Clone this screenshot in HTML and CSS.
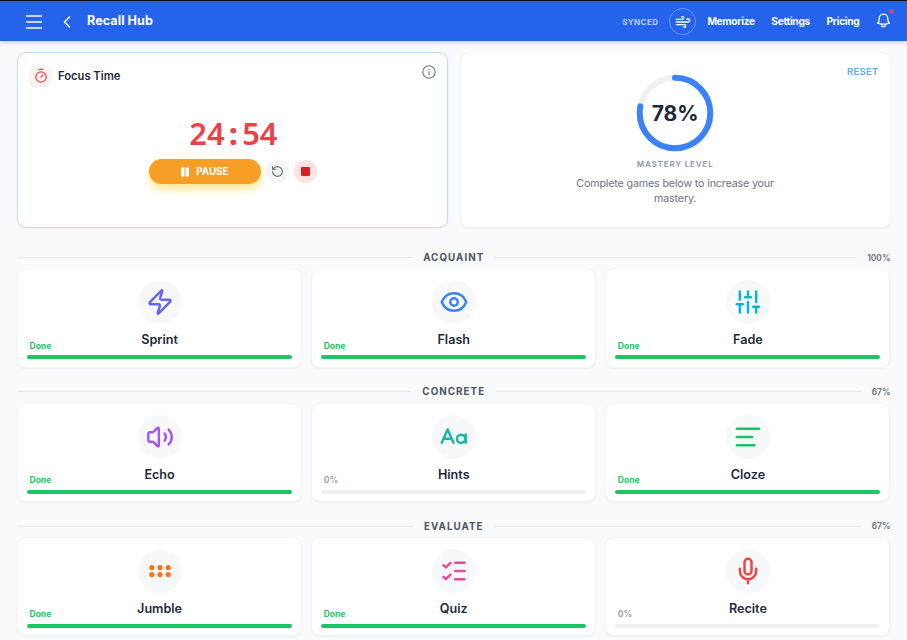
FILE: index.html
```html
<!DOCTYPE html>
<html lang="en">
<head>
    <meta charset="UTF-8">
    <meta name="viewport" content="width=device-width, initial-scale=1.0">
    <title>Recall Hub</title>
    <link rel="stylesheet" href="styles.css">
</head>
<body>

    <header class="topbar">
        <svg class="menu-icon" viewBox="0 0 16 14"><path d="M.5 1h15M.5 7h15M.5 13h15"/></svg>
        <svg class="back-icon" viewBox="0 0 8 12"><path d="M6.5 1L1.5 6l5 5"/></svg>
        <h1>Recall Hub</h1>
        <span class="synced">SYNCED</span>
        <span class="wind">
            <svg viewBox="0 0 24 24"><path d="M12.8 19.6A2 2 0 1 0 14 16H2M17.5 8a2.5 2.5 0 1 1 2 4H2M9.8 4.400A2 2 0 1 1 11 8H2"/></svg>
        </span>
        <nav>
            <a>Memorize</a>
            <a>Settings</a>
            <a>Pricing</a>
        </nav>
        <span class="bell">
            <svg viewBox="0 0 24 24"><path d="M14.857 17.082a23.848 23.848 0 0 0 5.454-1.31A8.967 8.967 0 0 1 18 9.750V9A6 6 0 0 0 6 9v.75a8.967 8.967 0 0 1-2.312 6.022c1.733.64 3.560 1.085 5.455 1.310m5.714 0a24.255 24.255 0 0 1-5.714 0m5.714 0a3 3 0 1 1-5.714 0"/></svg>
            <i class="bell-dot"></i>
        </span>
    </header>

    <main>
        <div class="summary">
            <section class="panel focus">
                <div class="focus-head">
                    <span class="focus-icon">
                        <svg viewBox="0 0 14 16"><circle cx="7" cy="9" r="5.200"/><path d="M5.200 1.300h3.600M7 9l2-2"/></svg>
                    </span>
                    <h2>Focus Time</h2>
                    <svg class="info" viewBox="0 0 14 14"><circle cx="7" cy="7" r="6.200"/><path d="M7 6.500v3.500M7 4v.6"/></svg>
                </div>
                <div class="time">24<span class="colon">:</span>54</div>
                <div class="controls">
                    <button class="pause"><svg viewBox="0 0 8 10"><path d="M0 .5h3.500v9H0zM4.500 .5h3.500v9H4.500z"/></svg>PAUSE</button>
                    <button class="round reset-timer"><svg viewBox="0 0 24 24"><path d="M3 12a9 9 0 1 0 9-9 9.750 9.750 0 0 0-6.740 2.740L3 8"/><path d="M3 3v5h5"/></svg></button>
                    <button class="round stop"><i></i></button>
                </div>
            </section>

            <section class="panel mastery">
                <a class="reset">RESET</a>
                <div class="ring">
                    <svg viewBox="0 0 78 78">
                        <circle class="ring-track" cx="39" cy="39" r="35.300"/>
                        <circle class="ring-value" cx="39" cy="39" r="35.300" pathLength="100" stroke-dasharray="78 100"/>
                    </svg>
                    <strong>78%</strong>
                </div>
                <h3>MASTERY LEVEL</h3>
                <p>Complete games below to increase your mastery.</p>
            </section>
        </div>

        <section class="stage">
            <div class="stage-head">
                <span class="line"></span>
                <h2>ACQUAINT</h2>
                <div class="stage-end"><span class="line"></span><span class="percent">100%</span></div>
            </div>
            <div class="games">
                <div class="game done">
                    <span class="icon indigo"><svg viewBox="0 0 24 24"><path d="M4 14a1 1 0 0 1-.78-1.630l9.900-10.200a.5.5 0 0 1 .86.460l-1.920 6.020A1 1 0 0 0 13 10h7a1 1 0 0 1 .78 1.630l-9.900 10.200a.5.5 0 0 1-.86-.460l1.920-6.020A1 1 0 0 0 11 14z"/></svg></span>
                    <h3>Sprint</h3>
                    <span class="status">Done</span>
                    <div class="bar"></div>
                </div>
                <div class="game done">
                    <span class="icon blue"><svg viewBox="0 0 24 24"><path d="M1.500 12C3.500 7 7.500 4.500 12 4.500S20.500 7 22.500 12C20.500 17 16.500 19.500 12 19.500S3.500 17 1.500 12z"/><circle cx="12" cy="12" r="3.200"/></svg></span>
                    <h3>Flash</h3>
                    <span class="status">Done</span>
                    <div class="bar"></div>
                </div>
                <div class="game done">
                    <span class="icon cyan"><svg viewBox="0 0 24 24"><path d="M5 21v-7M5 10V3M12 21v-9M12 8V3M19 21v-5M19 12V3M2.500 14h5M9.500 8h5M16.500 16h5"/></svg></span>
                    <h3>Fade</h3>
                    <span class="status">Done</span>
                    <div class="bar"></div>
                </div>
            </div>
        </section>

        <section class="stage">
            <div class="stage-head">
                <span class="line"></span>
                <h2>CONCRETE</h2>
                <div class="stage-end"><span class="line"></span><span class="percent">67%</span></div>
            </div>
            <div class="games">
                <div class="game done">
                    <span class="icon purple"><svg viewBox="0 0 24 24"><path d="M11 4.700a.7.7 0 0 0-1.200-.5L6.400 7.600A1.400 1.400 0 0 1 5.400 8H3a1 1 0 0 0-1 1v6a1 1 0 0 0 1 1h2.400a1.400 1.400 0 0 1 1 .4l3.400 3.400a.7.7 0 0 0 1.200-.5zM16 9a5 5 0 0 1 0 6M19.400 18.400a9 9 0 0 0 0-12.800"/></svg></span>
                    <h3>Echo</h3>
                    <span class="status">Done</span>
                    <div class="bar"></div>
                </div>
                <div class="game">
                    <span class="icon teal"><svg viewBox="0 0 24 24"><path d="M1.500 17L6.500 5.500l5 11.500M3.300 13.500h6.400"/><circle cx="18" cy="13.500" r="3.500"/><path d="M22 9.800v7.200"/></svg></span>
                    <h3>Hints</h3>
                    <span class="status">0%</span>
                    <div class="bar"></div>
                </div>
                <div class="game done">
                    <span class="icon green"><svg viewBox="0 0 24 24"><path d="M2.500 5h19M2.500 12h13M2.500 19h15"/></svg></span>
                    <h3>Cloze</h3>
                    <span class="status">Done</span>
                    <div class="bar"></div>
                </div>
            </div>
        </section>

        <section class="stage">
            <div class="stage-head">
                <span class="line"></span>
                <h2>EVALUATE</h2>
                <div class="stage-end"><span class="line"></span><span class="percent">67%</span></div>
            </div>
            <div class="games">
                <div class="game done">
                    <span class="icon orange"><svg viewBox="0 0 24 24"><circle cx="5" cy="9" r="1.200"/><circle cx="12" cy="9" r="1.200"/><circle cx="19" cy="9" r="1.200"/><circle cx="5" cy="15" r="1.200"/><circle cx="12" cy="15" r="1.200"/><circle cx="19" cy="15" r="1.200"/></svg></span>
                    <h3>Jumble</h3>
                    <span class="status">Done</span>
                    <div class="bar"></div>
                </div>
                <div class="game done">
                    <span class="icon pink"><svg viewBox="0 0 24 24"><path d="M3 7l2 2 4-4M3 17l2 2 4-4M13 5h8M13 12h8M13 19h8"/></svg></span>
                    <h3>Quiz</h3>
                    <span class="status">Done</span>
                    <div class="bar"></div>
                </div>
                <div class="game">
                    <span class="icon red"><svg viewBox="0 0 24 24"><rect x="9" y="1.500" width="6" height="13.500" rx="3"/><path d="M19 10v2a7 7 0 0 1-14 0v-2M12 19v3.500"/></svg></span>
                    <h3>Recite</h3>
                    <span class="status">0%</span>
                    <div class="bar"></div>
                </div>
            </div>
        </section>
    </main>

</body>
</html>
```

FILE: styles.css
```css
* {
    margin: 0;
    padding: 0;
    box-sizing: border-box;
}
body {
    height: 640px;
    overflow: hidden;
    font-family: Inter, sans-serif;
    background-color: #f9fafb;
    color: #1e293b;
}
svg {
    display: block;
    fill: none;
    stroke: currentColor;
    stroke-linecap: round;
    stroke-linejoin: round;
}
button {
    border: none;
    font-family: inherit;
    cursor: pointer;
}

/* Top bar */
.topbar {
    height: 41px;
    padding: 1px 17px 0 26px;
    border-top: 1px solid #111;
    background-color: #2563eb;
    color: white;
    display: flex;
    align-items: center;
    box-shadow: 0 1px 5px rgba(0, 0, 0, 0.22);
}
.menu-icon {
    width: 16px;
    height: 14px;
    stroke-width: 1.4;
}
.back-icon {
    width: 8px;
    height: 12px;
    margin-left: 21px;
    stroke-width: 1.5;
}
h1 {
    margin: 0 auto 2px 16px;
    font-size: 12.6px;
    font-weight: 700;
    letter-spacing: 0.05px;
}
.synced {
    font-size: 8px;
    font-weight: 700;
    letter-spacing: 0.4px;
    color: #b7d0fc;
}
.wind {
    width: 27px;
    height: 27px;
    margin: 0 11px;
    border: 1px solid rgba(255, 255, 255, 0.3);
    border-radius: 50%;
    display: grid;
    place-items: center;
}
.wind svg {
    width: 16px;
    height: 16px;
    stroke-width: 2;
}
nav {
    display: flex;
    gap: 16.5px;
    margin-top: -1px;
    font-size: 10.2px;
    font-weight: 700;
    letter-spacing: -0.3px;
}
.bell {
    position: relative;
    margin: -2px -2px 0 15.5px;
}
.bell svg {
    width: 17px;
    height: 17px;
    stroke-width: 1.8;
}
.bell-dot {
    position: absolute;
    top: -3px;
    right: -2px;
    width: 5px;
    height: 5px;
    border-radius: 50%;
    background-color: #a8558c;
}

/* Focus and mastery panels */
main {
    padding: 11px 16.500px 0 17px;
}
.summary {
    display: grid;
    grid-template-columns: 1fr 1fr;
    gap: 12px;
}
.panel {
    height: 176px;
    border: 1px solid #f3f4f6;
    border-radius: 9px;
    background-color: white;
    box-shadow: 0 1px 2px rgba(0, 0, 0, 0.05);
    display: flex;
    flex-direction: column;
    align-items: center;
}
.focus {
    border-color: #bfdbfe;
}
.focus-head {
    width: 100%;
    padding: 12px 11px 0;
    display: flex;
    align-items: center;
}
.focus-icon {
    width: 23px;
    height: 22px;
    border-radius: 6px;
    background-color: #fef2f2;
    color: #ef4444;
    display: grid;
    place-items: center;
}
.focus-icon svg {
    width: 14px;
    height: 16px;
    stroke-width: 1.2;
}
.focus-head h2 {
    margin-left: 6px;
    font-size: 11.2px;
    font-weight: 600;
}
.info {
    width: 14px;
    height: 14px;
    margin: -8px 0 0 auto;
    color: #6b7280;
    stroke-width: 1.1;
}
.time {
    margin: 28px 0 0 2px;
    font-family: "Noto Sans", sans-serif;
    font-size: 30.800px;
    font-weight: 650;
    line-height: 36px;
    color: #ef4048;
}
.colon {
    display: inline-block;
    width: 17.700px;
    font-weight: 800;
    text-align: center;
}
.controls {
    margin: 8px 0 0 1px;
    display: flex;
    align-items: center;
    gap: 5px;
}
.pause {
    width: 112px;
    height: 25px;
    padding-bottom: 1px;
    border-radius: 13px;
    background-color: #f79e26;
    color: white;
    font-size: 9.800px;
    font-weight: 700;
    display: flex;
    align-items: center;
    justify-content: center;
    gap: 7px;
    box-shadow: 0 5px 10px #fde68a;
}
.pause svg {
    width: 8px;
    height: 10px;
    margin-top: 2px;
    fill: white;
    stroke: none;
}
.round {
    width: 23px;
    height: 23px;
    border-radius: 50%;
    display: grid;
    place-items: center;
}
.reset-timer {
    background-color: #f3f4f6;
    color: #6b7280;
}
.reset-timer svg {
    width: 13px;
    height: 13px;
    stroke-width: 2.2;
}
.stop {
    background-color: #fee2e2;
}
.stop i {
    width: 9px;
    height: 9px;
    border-radius: 1px;
    background-color: #dc1c2a;
}
.mastery {
    position: relative;
    padding-top: 21px;
}
.reset {
    position: absolute;
    top: 13px;
    right: 11px;
    font-size: 9.500px;
    font-weight: 600;
    letter-spacing: 0.25px;
    color: #60a5fa;
}
.ring {
    width: 78px;
    height: 78px;
    display: grid;
    place-items: center;
}
.ring svg,
.ring strong {
    grid-area: 1 / 1;
}
.ring svg {
    width: 78px;
    transform: rotate(-90deg);
    stroke-width: 6;
}
.ring-track {
    stroke: #eff0f2;
}
.ring-value {
    stroke: #3b82f6;
}
.ring strong {
    font-size: 21px;
    font-weight: 700;
}
.mastery h3 {
    margin-top: 7px;
    font-size: 8.100px;
    line-height: 11px;
    font-weight: 600;
    letter-spacing: 0.8px;
    color: #8b95a5;
}
.mastery p {
    width: 220px;
    margin-top: 6px;
    font-size: 10.700px;
    letter-spacing: -0.15px;
    line-height: 15px;
    text-align: center;
    color: #6b7280;
}

/* Game stages */
.stage {
    margin-top: 17.900px;
}
.stage-head {
    height: 12px;
    display: grid;
    grid-template-columns: 1fr auto 1fr;
    align-items: center;
    gap: 11px;
}
.stage-head h2 {
    font-size: 9.800px;
    font-weight: 700;
    letter-spacing: 1.050px;
    color: #4b5563;
}
.stage-end {
    display: flex;
    align-items: center;
    gap: 11px;
}
.line {
    flex: 1;
    height: 1px;
    background-color: #e5e7eb;
}
.percent {
    font-size: 8.500px;
    font-weight: 600;
    color: #6b7280;
}
.summary + .stage {
    margin-top: 23.500px;
}
.games {
    margin-top: 4.900px;
    display: grid;
    grid-template-columns: repeat(3, 1fr);
    gap: 9px;
}
.game {
    height: 99.500px;
    padding: 11px 9px 0;
    border: 1px solid #f3f4f6;
    border-radius: 9px;
    background-color: white;
    box-shadow: 0 1px 2px rgba(0, 0, 0, 0.05);
}
.icon {
    width: 44px;
    height: 44px;
    margin: 0 auto;
    border-radius: 50%;
    background-color: #f7f8fa;
    display: grid;
    place-items: center;
}
.icon svg {
    width: 28px;
    height: 28px;
    stroke-width: 2.100;
}
.indigo { color: #6366f1; }
.blue { color: #3b82f6; }
.cyan { color: #06b6d4; }
.purple { color: #a855f7; }
.teal { color: #14b8a6; }
.green { color: #1bc564; }
.orange { color: #f97316; }
.pink { color: #ec4899; }
.red { color: #ef4444; }
.game h3 {
    margin-top: 8px;
    font-size: 12.600px;
    font-weight: 600;
    line-height: 16px;
    text-align: center;
}
.status {
    display: block;
    margin: -7.500px 0 0 2.500px;
    font-size: 8.500px;
    font-weight: 700;
    line-height: 11px;
    color: #9ca3af;
}
.bar {
    height: 4px;
    margin-top: 3.500px;
    border-radius: 2px;
    background-color: #eff0f2;
}
.done .status {
    color: #22c55e;
}
.done .bar {
    background-color: #1bc564;
}
```
